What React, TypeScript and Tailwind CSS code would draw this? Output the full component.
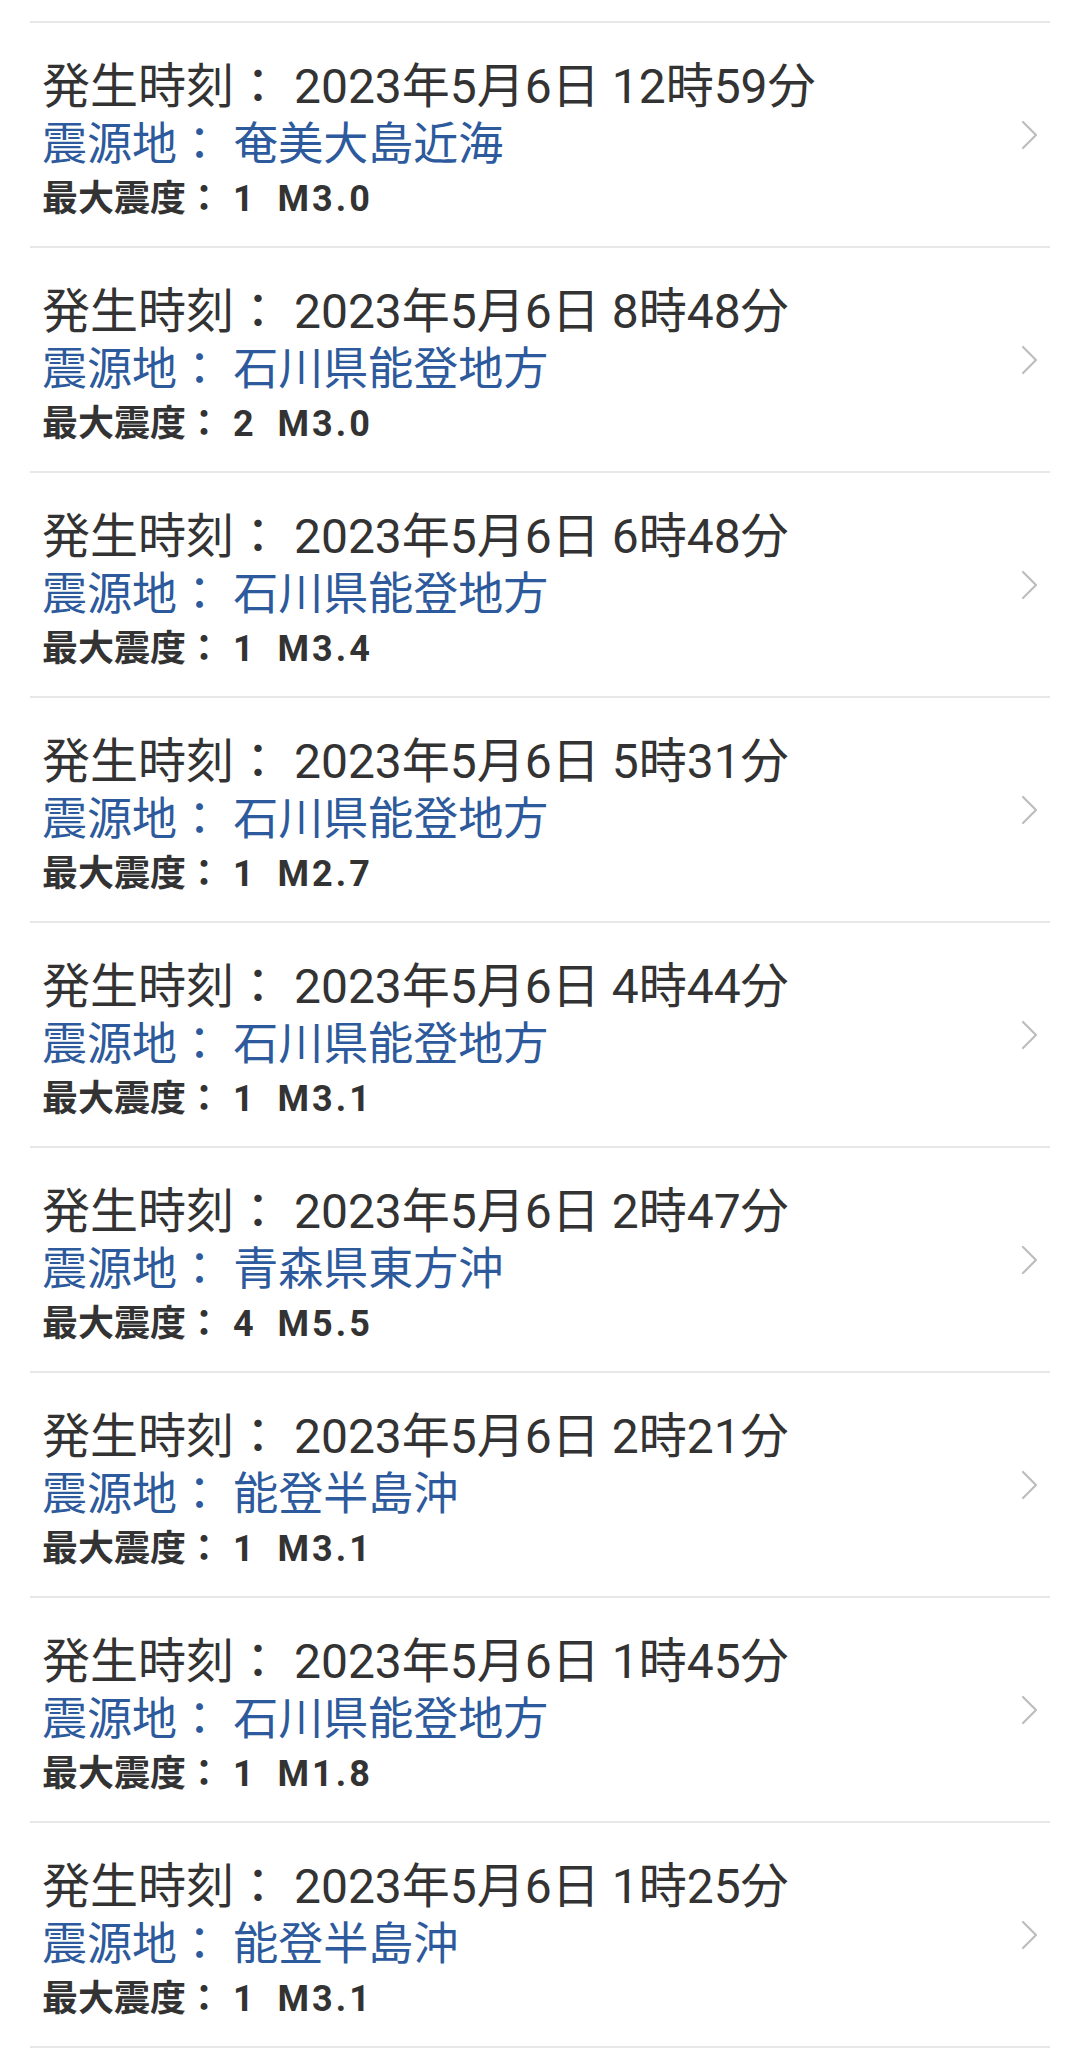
import React from 'react';

type Quake = { time: string; place: string; shindo: string; mag: string };

const quakes: Quake[] = [
    { time: '2023年5月6日 12時59分', place: '奄美大島近海', shindo: '1', mag: 'M3.0' },
    { time: '2023年5月6日 8時48分', place: '石川県能登地方', shindo: '2', mag: 'M3.0' },
    { time: '2023年5月6日 6時48分', place: '石川県能登地方', shindo: '1', mag: 'M3.4' },
    { time: '2023年5月6日 5時31分', place: '石川県能登地方', shindo: '1', mag: 'M2.7' },
    { time: '2023年5月6日 4時44分', place: '石川県能登地方', shindo: '1', mag: 'M3.1' },
    { time: '2023年5月6日 2時47分', place: '青森県東方沖', shindo: '4', mag: 'M5.5' },
    { time: '2023年5月6日 2時21分', place: '能登半島沖', shindo: '1', mag: 'M3.1' },
    { time: '2023年5月6日 1時45分', place: '石川県能登地方', shindo: '1', mag: 'M1.8' },
    { time: '2023年5月6日 1時25分', place: '能登半島沖', shindo: '1', mag: 'M3.1' },
];

const Chevron = () => (
    <svg width="20" height="30" viewBox="0 0 20 30" fill="none" className="shrink-0">
        <path d="M3 2 L16 15 L3 28" stroke="#bdbdbd" strokeWidth="2.2" strokeLinecap="round" strokeLinejoin="round" />
    </svg>
);

const QuakeRow = ({ q }: { q: Quake }) => (
    <div className="h-[225px] border-b-2 border-[#e8e8e8] flex items-center pl-[12px] pr-[10px]">
        <div className="flex-1 flex flex-col h-full">
            <div className="pt-[35px] text-[48px] leading-[58px] text-[#333333] whitespace-nowrap">
                発生時刻： {q.time}
            </div>
            <div className="text-[45px] leading-[58px] text-[#2d5a9c] whitespace-nowrap">
                震源地： {q.place}
            </div>
            <div className="text-[36px] leading-[50px] font-bold text-[#333333] whitespace-nowrap">
                最大震度：
                <span className="tracking-[2px]"> {q.shindo}&nbsp;&nbsp;</span>
                <span className="tracking-[3px]">{q.mag}</span>
            </div>
        </div>
        <Chevron />
    </div>
);

export default function App() {
    return (
        <div className="w-[1080px] min-h-[2053px] bg-white font-['Roboto','Noto_Sans_CJK_JP',sans-serif]">
            <div className="px-[30px]">
                {/* bottom edge of the row above, scrolled off */}
                <div className="h-[23px] border-b-2 border-[#e8e8e8]" />
                {quakes.map((q, i) => (
                    <QuakeRow key={i} q={q} />
                ))}
            </div>
        </div>
    );
}
